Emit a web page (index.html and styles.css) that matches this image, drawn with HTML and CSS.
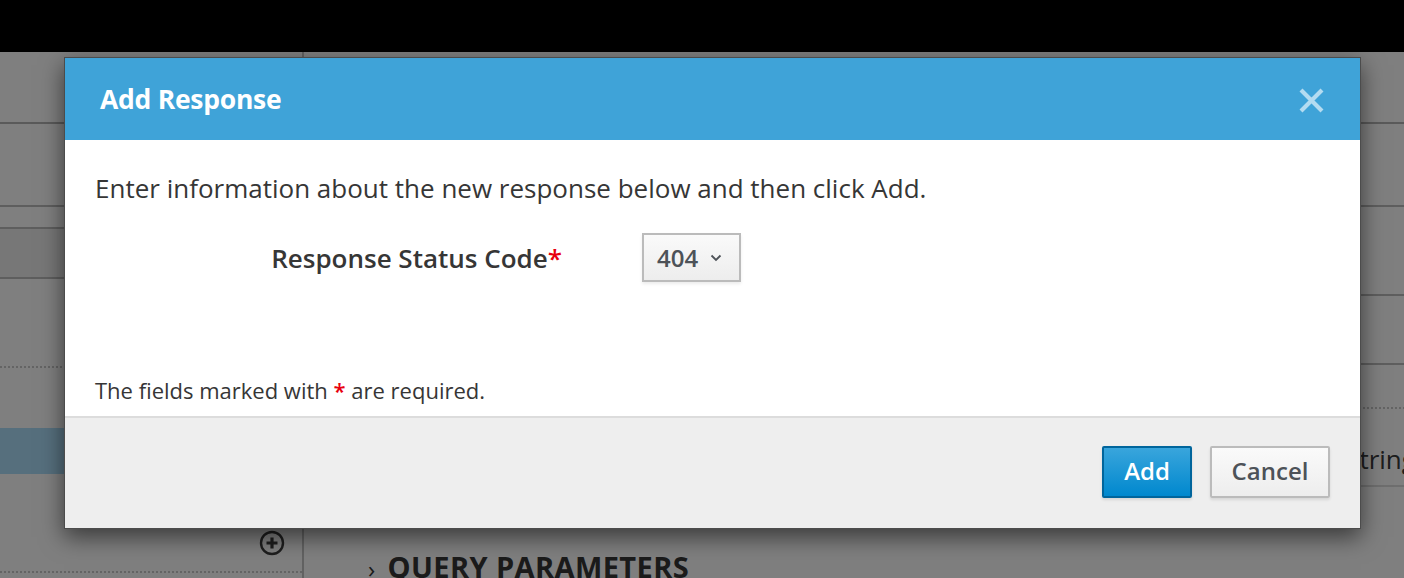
FILE: index.html
```html
<!DOCTYPE html>
<html>
<head>
<meta charset="utf-8">
<link rel="stylesheet" href="styles.css">
</head>
<body>
<div class="topbar"></div>
<div class="page">
  <aside class="sidebar">
    <div class="srow h72"></div>
    <div class="srow h83"></div>
    <div class="srow h22"></div>
    <div class="srow h50 band"></div>
    <div class="srow h89 dotted"></div>
    <div class="sgap h60"></div>
    <div class="sgap h46 selected"></div>
    <div class="srow h99 dotted plusrow">
      <svg class="plus" width="26" height="26" viewBox="0 0 26 26"><circle cx="13" cy="13" r="11" fill="none" stroke="#3c3c3c" stroke-width="2.4"/><path d="M13 7.5v11M7.5 13h11" stroke="#3c3c3c" stroke-width="3.2"/></svg>
    </div>
  </aside>
  <main class="main">
    <div class="mrow h72"></div>
    <div class="mrow h83"></div>
    <div class="mrow h89"></div>
    <div class="mrow h69"></div>
    <div class="mrow h44 dotted"></div>
    <div class="mrow h78 typerow"><span class="type">string</span></div>
    <h2 class="section"><span class="chev">›</span> QUERY PARAMETERS</h2>
  </main>
</div>
<div class="backdrop"></div>
<div class="modal">
  <div class="modal-header">
    <h1 class="modal-title">Add Response</h1>
    <svg class="close" width="27" height="27" viewBox="0 0 27 27"><path d="M3 3L24 24M24 3L3 24" stroke="#b4dcf1" stroke-width="4.2"/></svg>
  </div>
  <div class="modal-body">
    <p class="intro">Enter information about the new response below and then click Add.</p>
    <div class="form-row">
      <label class="label">Response Status Code<span class="req">*</span></label>
      <div class="select"><span>404</span><svg width="12" height="8" viewBox="0 0 12 8"><path d="M1.5 1.5L6 6L10.5 1.5" fill="none" stroke="#4d5258" stroke-width="1.8"/></svg></div>
    </div>
    <p class="note">The fields marked with <span class="req">*</span> are required.</p>
  </div>
  <div class="modal-footer">
    <button class="btn primary">Add</button>
    <button class="btn default">Cancel</button>
  </div>
</div>
</body>
</html>
```
FILE: styles.css
```css
* { box-sizing: border-box; }
html, body { margin: 0; padding: 0; }
body {
  width: 1404px;
  height: 578px;
  overflow: hidden;
  font-family: "Open Sans", "Noto Sans", sans-serif;
  background: #fff;
  position: relative;
}
.topbar { height: 52px; background: #000; }
.page { display: flex; height: 526px; background: #fff; }
.sidebar { width: 304px; border-right: 2px solid #c4c4c4; display: flex; flex-direction: column; flex: none; }
.main { flex: 1; display: flex; flex-direction: column; }
.srow, .mrow { border-bottom: 2px solid #bdbdbd; flex: none; }
.sgap { flex: none; }
.h72 { height: 72px; }
.h83 { height: 83px; }
.h22 { height: 22px; }
.h50 { height: 50px; }
.h89 { height: 89px; }
.h60 { height: 60px; }
.h46 { height: 46px; }
.h99 { height: 99px; }
.h69 { height: 69px; }
.h44 { height: 44px; }
.h78 { height: 78px; }
.band { background: #eeeeee; }
.selected { background: #acdffa; }
.dotted { border-bottom: 2px dotted #c8c8c8; }
.srow.h72, .mrow.h72 { border-bottom-color: #b4b4b4; }
.plusrow { display: flex; justify-content: flex-end; align-items: flex-start; padding: 56px 17px 0 0; }
.typerow { border-bottom-color: #dcdcdc; display: flex; align-items: flex-start; padding: 32px 0 0 1043px; }
.type { font-size: 26px; line-height: 36px; color: #3a3a3a; white-space: nowrap; }
.section { margin: 60px 0 0 64px; font-size: 29px; font-weight: 700; color: #363636; letter-spacing: 0.4px; white-space: nowrap; }
.chev { font-weight: 400; font-size: 24px; margin-right: 4px; }
.backdrop { position: absolute; left: 0; top: 52px; right: 0; bottom: 0; background: rgba(0,0,0,0.5); }
.modal {
  position: absolute;
  left: 64px;
  top: 57px;
  width: 1297px;
  height: 472px;
  border: 1px solid #4c4c4c;
  background: #fff;
  box-shadow: 0 8px 22px rgba(0,0,0,0.55);
  display: flex;
  flex-direction: column;
}
.modal-header {
  height: 82px;
  background: #3fa3d8;
  display: flex;
  align-items: center;
  justify-content: space-between;
  padding: 0 35px 0 35px;
  flex: none;
}
.modal-title { margin: 0; font-size: 26.5px; font-weight: 700; color: #fff; letter-spacing: -0.25px; }
.close { margin-top: 2px; }
.modal-body { flex: 1; padding: 30px 30px 0 30px; display: flex; flex-direction: column; }
.intro { margin: 0; font-size: 26px; color: #363636; white-space: nowrap; }
.form-row { display: flex; align-items: center; margin-top: 27px; }
.label { width: 467px; text-align: right; font-size: 26px; font-weight: 600; color: #363636; white-space: nowrap; }
.req { color: #e8000d; font-weight: 600; }
.select {
  margin-left: 80px;
  width: 99px;
  height: 49px;
  border: 2px solid #bbb;
  background: linear-gradient(#fafafa, #ededed);
  display: flex;
  align-items: center;
  padding-left: 13px;
  gap: 12px;
  font-size: 24px;
  font-weight: 600;
  color: #4d5258;
  box-shadow: 0 2px 3px rgba(0,0,0,0.08);
}
.note { margin: auto 0 11px 0; font-size: 22px; color: #363636; white-space: nowrap; }
.modal-footer {
  height: 112px;
  border-top: 2px solid #dcdcdc;
  background: #eeeeee;
  display: flex;
  justify-content: flex-end;
  align-items: flex-start;
  gap: 18px;
  padding: 28px 30px 0 0;
  flex: none;
}
.btn {
  font-family: "Open Sans", "Noto Sans", sans-serif;
  font-size: 24px;
  font-weight: 600;
  height: 52px;
  padding: 0 0 4px 0;
  border-radius: 2px;
  box-shadow: 0 2px 3px rgba(0,0,0,0.1);
}
.primary { width: 90px; background: linear-gradient(#39a5dc, #0088ce); border: 2px solid #00659c; color: #fff; }
.default { width: 120px; background: linear-gradient(#fafafa, #ededed); border: 2px solid #bbb; color: #4d5258; }
```
